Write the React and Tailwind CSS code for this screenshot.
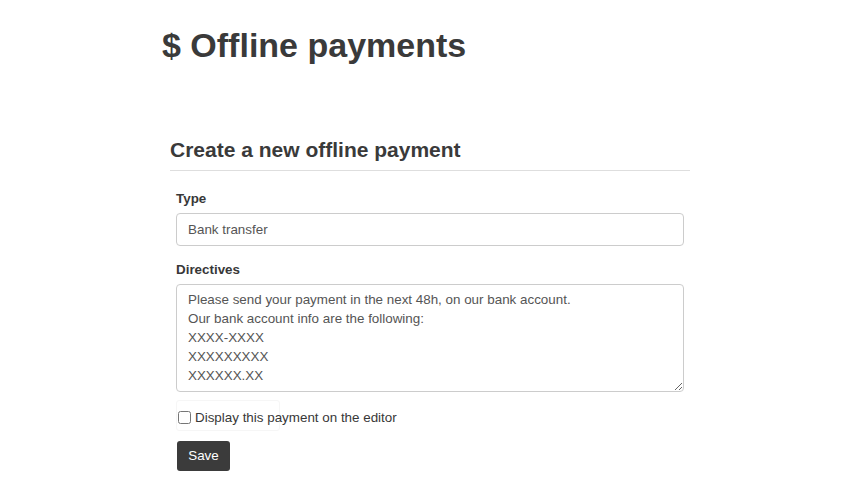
import { useState } from 'react';

export default function App() {
  const [type, setType] = useState('Bank transfer');
  const [directives, setDirectives] = useState(
    'Please send your payment in the next 48h, on our bank account.\nOur bank account info are the following:\nXXXX-XXXX\nXXXXXXXXX\nXXXXXX.XX'
  );
  const [display, setDisplay] = useState(false);

  return (
    <div className="min-h-[500px] bg-white pl-[162px] pt-[27px] text-[#383838] font-['Liberation_Sans',Arial,sans-serif]">
      <h1 className="text-[34px] font-bold leading-[37px] text-[#3a3a3a]">$ Offline payments</h1>

      <div className="ml-[8px] mt-[74px] w-[520px]">
        <h2 className="border-b border-[#dedede] pb-[8px] text-[21px] font-bold leading-[24px] text-[#3a3a3a]">
          Create a new offline payment
        </h2>

        <form className="px-[6px] pt-[18px] text-[13.4px]" onSubmit={e => e.preventDefault()}>
          <label className="block font-bold leading-[19px]">Type</label>
          <input
            value={type}
            onChange={e => setType(e.target.value)}
            className="mt-[5px] block h-[33px] w-[508px] rounded-[4px] border border-[#ccc] px-[11px] text-[13.4px] text-[#555] outline-none"
          />

          <label className="mt-[14px] block font-bold leading-[19px]">Directives</label>
          <textarea
            value={directives}
            onChange={e => setDirectives(e.target.value)}
            className="mt-[5px] block h-[108px] w-[508px] rounded-[4px] border border-[#ccc] px-[11px] py-[5px] text-[13.4px] leading-[19px] text-[#555] outline-none"
          />

          <div className="relative mt-[8px] h-[31px] w-[104px] rounded-[3px] border border-[#f6f6f6]">
            <label className="absolute left-[1px] top-[8px] flex items-center whitespace-nowrap leading-[17px]">
              <input
                type="checkbox"
                checked={display}
                onChange={e => setDisplay(e.target.checked)}
                className="m-0 h-[13px] w-[13px]"
              />
              <span className="ml-[4px]">Display this payment on the editor</span>
            </label>
          </div>

          <button
            type="submit"
            className="ml-[1px] mt-[10px] block h-[30px] w-[53px] rounded-[3px] bg-[#3b3b3b] text-[13.4px] text-white"
          >
            Save
          </button>
        </form>
      </div>
    </div>
  );
}
